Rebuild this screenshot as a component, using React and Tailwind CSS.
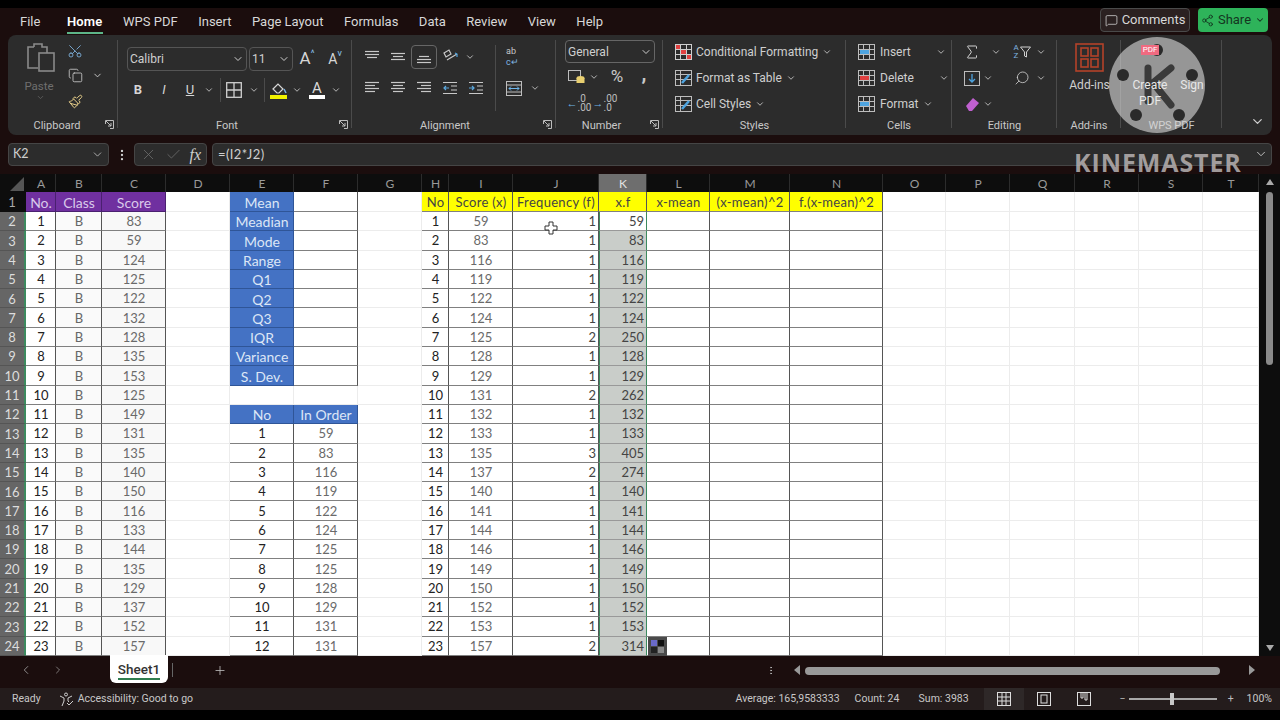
import React from "react";
import { ChevronDown, ChevronLeft, ChevronRight, Plus, Scissors, Copy, Paintbrush, X, Check, Search, Sigma, MessageSquare, Share2, EllipsisVertical } from "lucide-react";

const colDefs = ["A","B","C","D","E","F","G","H","I","J","K","L","M","N","O","P","Q","R","S","T"];
const scores = [83,59,124,125,122,132,128,135,153,125,149,131,135,140,150,116,133,144,135,129,137,152,157];
const sorted = [59,83,116,119,122,124,125,128,129,131,132,133,135,137,140,141,144,146,149,150,152,153,157];
const freq = [1,1,1,1,1,1,2,1,1,2,1,1,3,2,1,1,1,1,1,1,1,1,2];
const stats = ["Mean","Meadian","Mode","Range","Q1","Q2","Q3","IQR","Variance","S. Dev."];
const ordered = [59,83,116,119,122,124,125,125,128,129,131,131];
const yellowHeads = { H: "No", I: "Score (x)", J: "Frequency (f)", K: "x.f", L: "x-mean", M: "(x-mean)^2", N: "f.(x-mean)^2" };
const purpleHeads = { A: "No.", B: "Class", C: "Score" };

function cellInfo(c, r) {
  const i = r - 2;
  const center = "justify-center pl-[1px]";
  const line = "border-r-[#555] border-b-[#808080]";
  if ("ABC".includes(c)) {
    if (r === 1) return [purpleHeads[c], `${center} bg-[#7030a0] text-[#d9c9ea] text-[14px] border-r-[#4a2070] border-b-[#4a2070]`];
    if (c === "A") return [i + 1, `${center} ${line} text-[#222] bg-white`];
    if (c === "B") return ["B", `${center} ${line} text-[#666] bg-[#fafafa]`];
    return [scores[i], `${center} ${line} text-[#6a6a6a] bg-[#f8f8f8]`];
  }
  if (c === "E" || c === "F") {
    if (r <= 10) {
      if (c === "E") return [stats[r - 1], `${center} bg-[#4472c4] text-[#dce6f6] text-[14px] border-r-[#2f5597] border-b-[#2f5597]`];
      return ["", `bg-white ${line}`];
    }
    if (r === 12) return [c === "E" ? "No" : "In Order", `${center} bg-[#4472c4] text-[#dce6f6] text-[14px] border-r-[#2f5597] border-b-[#2f5597]`];
    if (r > 12) {
      const k = r - 13;
      return c === "E" ? [k + 1, `${center} ${line} text-[#222] bg-white`] : [ordered[k], `${center} ${line} text-[#6a6a6a] bg-white`];
    }
  }
  if ("HIJKLMN".includes(c)) {
    if (r === 1) return [yellowHeads[c], `${center} bg-[#ffff00] text-[#444] text-[13px] tracking-[0.3px] ${line}`];
    if (c === "H") return [i + 1, `${center} ${line} text-[#222] bg-white`];
    if (c === "I") return [sorted[i], `${center} ${line} text-[#6a6a6a] bg-white`];
    if (c === "J") return [freq[i], `justify-end pr-[2px] ${line} text-[#444] bg-white`];
    if (c === "K") {
      const v = sorted[i] * freq[i];
      return [v, `justify-end pr-[2px] text-[#444] border-b-[#999] border-l border-l-[#3c8a5f] border-r-[#3c8a5f] ${r === 2 ? "bg-white" : "bg-[#c9cdc9]"}`];
    }
    return ["", `bg-white ${line}`];
  }
  return ["", "bg-white border-r-[#ececec] border-b-[#ececec]"];
}

function Sheet() {
  const rows = Array.from({ length: 24 }, (_, n) => n + 1);
  return (
    <div className="grid w-[1259px] grid-cols-[26px_30px_46px_64px_64px_64px_64px_64px_27px_64px_86px_48px_63px_80px_93px_63px_64px_65px_64px_64px_56px] grid-rows-[18px_20px] auto-rows-[19.3px] font-['Lato',sans-serif] text-[13px]">
      <div className="bg-[#0d0d0d] flex items-end justify-end pr-[2px] pb-[1px]">
        <div className="w-0 h-0 border-l-[14px] border-l-transparent border-b-[14px] border-b-[#555]" />
      </div>
      {colDefs.map((c) => (
        <div key={c} className={`flex items-center justify-center pt-[2px] pl-[1px] text-[12px] border-r border-r-[#2c2c2c] ${c === "K" ? "bg-[#6e6e6e] text-[#e2e2e2]" : "bg-[#0d0d0d] text-[#9a9a9a]"}`}>{c}</div>
      ))}
      {rows.map((r) => (
        <React.Fragment key={r}>
          <div className={`flex items-center justify-center pt-[2px] text-[13px] border-r-2 ${r === 1 ? "bg-[#0d0d0d] text-[#aaa] border-r-[#0d0d0d]" : "bg-[#666] text-[#ddd] border-r-[#3c8a5f] border-b border-b-[#555]"}`}>{r}</div>
          {colDefs.map((c) => {
            const [t, cls] = cellInfo(c, r);
            return <div key={c} className={`flex items-center pt-[1.5px] overflow-hidden whitespace-nowrap border-r border-b ${cls}`}>{t}</div>;
          })}
        </React.Fragment>
      ))}
    </div>
  );
}

const Chev = ({ s = 12, c = "text-[#cfcfcf]" }) => <ChevronDown size={s} strokeWidth={2} className={c} />;

const Lines = ({ ys, xs }) => (
  <svg width="16" height="14" viewBox="0 0 16 14" stroke="#c8c8c8" strokeWidth="1.2">
    {ys.map((y, i) => <line key={i} x1={xs[i][0]} x2={xs[i][1]} y1={y} y2={y} />)}
  </svg>
);
const AL = <Lines ys={[1.5, 4.5, 7.5, 10.5]} xs={[[1, 15], [1, 11], [1, 15], [1, 11]]} />;
const AC = <Lines ys={[1.5, 4.5, 7.5, 10.5]} xs={[[1, 15], [3, 13], [1, 15], [3, 13]]} />;
const AR = <Lines ys={[1.5, 4.5, 7.5, 10.5]} xs={[[1, 15], [5, 15], [1, 15], [5, 15]]} />;
const VT = <Lines ys={[1.5, 4.5, 7.5]} xs={[[1, 15], [1, 15], [3, 13]]} />;
const VM = <Lines ys={[3.5, 6.5, 9.5]} xs={[[1, 15], [3, 13], [1, 15]]} />;
const VB = <Lines ys={[6.5, 9.5, 12.5]} xs={[[3, 13], [1, 15], [1, 15]]} />;
const Indent = ({ flip }) => (
  <svg width="16" height="14" viewBox="0 0 16 14" stroke="#c8c8c8" strokeWidth="1.2" fill="none">
    <path d="M1 1.5h14M1 12.5h14M9 5h6M9 9h6" />
    <path d={flip ? "M1 7h5M4 5l2 2-2 2" : "M2 7h5M4 5L2 7l2 2"} stroke="#5aa6dc" />
  </svg>
);
const Launcher = () => (
  <svg width="9" height="9" viewBox="0 0 9 9" fill="none" stroke="#bdbdbd" strokeWidth="1"><path d="M.5 4V.5h8v8H5" /><path d="M1 1l5 5M6 3v3H3" /></svg>
);

const Bx = ({ children, className = "" }) => <div className={`flex items-center justify-center shrink-0 ${className}`}>{children}</div>;

const Group = ({ w, lab = "", label, launcher, children, last }) => (
  <div className={`relative flex flex-col h-full shrink-0 pt-[5px] ${w} ${last ? "" : "after:absolute after:right-0 after:top-[5px] after:bottom-[7px] after:w-px after:bg-[#4b4b4b]"}`}>
    <div className="flex-1 min-h-0">{children}</div>
    <div className={`h-[22px] flex items-center justify-center text-[11px] text-[#c8c8c8] pt-[4px] ${lab}`}>
      {label}
      {launcher && <span className="absolute right-[4px] bottom-[6px]"><Launcher /></span>}
    </div>
  </div>
);

const GridIcon = () => (
  <svg width="17" height="16" viewBox="0 0 17 16" fill="none" stroke="#cfcfcf" strokeWidth="1">
    <rect x=".5" y=".5" width="16" height="15" />
    <path d="M.5 5.5h16M.5 10.5h16M5.5.5v15M11.5.5v15" />
    <rect x="1" y="1" width="4" height="4" fill="#e04040" stroke="none" /><rect x="6" y="6" width="5" height="4" fill="#e04040" stroke="none" /><rect x="12" y="11" width="4" height="4" fill="#e04040" stroke="none" />
  </svg>
);
const TableIcon = () => (
  <svg width="17" height="16" viewBox="0 0 17 16" fill="none" stroke="#bdbdbd" strokeWidth="1">
    <rect x=".5" y=".5" width="16" height="15" /><path d="M.5 4.5h16M.5 9.5h16M5.5.5v15" />
    <path d="M7 13l7-8" stroke="#4ea4e0" strokeWidth="2.5" />
  </svg>
);
const CellIcon = ({ color = "#4ea4e0" }) => (
  <svg width="17" height="16" viewBox="0 0 17 16" fill="none" stroke="#bdbdbd" strokeWidth="1">
    <rect x=".5" y=".5" width="16" height="15" /><path d="M.5 5.5h16M.5 10.5h16M5.5.5v15M11.5.5v15" />
    <rect x="2" y="6" width="9" height="4" fill={color} stroke="none" />
  </svg>
);

function Ribbon() {
  return (
    <div className="mx-2 h-[100px] rounded-lg bg-[#2c2c2c] flex font-['Roboto',sans-serif] text-[#d6d6d6] relative">
      <Group w="w-[110px]" lab="pr-[12px]" label="Clipboard" launcher>
        <div className="flex">
          <div className="w-[55px] flex flex-col items-center pl-[10px] pt-[2px]">
            <svg width="30" height="30" viewBox="0 0 30 30" fill="none" stroke="#8a8a8a" strokeWidth="1.6">
              <path d="M8 5H2v21h10" /><path d="M8 5V2h8v3h5v6" /><rect x="13" y="11" width="15" height="18" />
            </svg>
            <span className="text-[11.5px] text-[#6f6f6f] mt-[7px] leading-[14px] -ml-[3px]">Paste</span>
            <Chev s={9} c="text-[#666]" />
          </div>
          <div className="flex flex-col items-start pl-[2px] gap-[6px] pt-[1px]">
            <Bx className="w-[20px] h-[19px]"><Scissors size={16} strokeWidth={1.3} className="text-[#7fb4e0] -rotate-90" /></Bx>
            <div className="flex items-center"><Bx className="w-[20px] h-[19px]"><Copy size={15} strokeWidth={1.3} className="text-[#cfcfcf]" /></Bx><Bx className="w-[24px]"><Chev s={11} /></Bx></div>
            <Bx className="w-[20px] h-[19px] mt-[1px]"><Paintbrush size={15} strokeWidth={1.6} className="text-[#e8cf8a]" /></Bx>
          </div>
        </div>
      </Group>

      <Group w="w-[234px]" lab="pr-[16px]" label="Font" launcher>
        <div className="flex items-center pl-[9px] h-[24px] mt-[7px] gap-[2px]">
          <div className="w-[120px] h-[24px] rounded border border-[#555] flex items-center justify-between px-[2px] text-[12px] text-[#cfcfcf]">Calibri<Chev /></div>
          <div className="w-[44px] h-[24px] rounded border border-[#555] flex items-center justify-between px-[2px] text-[12px] text-[#cfcfcf]">11<Chev /></div>
          <Bx className="w-[26px] text-[17px] ml-[-1px]">A<sup className="text-[#8cc4ee] text-[9px] -mt-1">^</sup></Bx>
          <Bx className="w-[26px] text-[14px]">A<sup className="text-[#8cc4ee] text-[9px] -mt-1">v</sup></Bx>
        </div>
        <div className="flex items-center pl-[7px] h-[24px] mt-[7px] text-[13px]">
          <Bx className="w-[26px] font-bold">B</Bx>
          <Bx className="w-[26px] italic">I</Bx>
          <Bx className="w-[26px] underline">U</Bx>
          <Bx className="w-[12px]"><Chev s={10} /></Bx>
          <div className="w-px h-[24px] bg-[#4b4b4b] ml-[5px]" />
          <Bx className="w-[26px]"><svg width="16" height="16" viewBox="0 0 16 16" fill="none" stroke="#cfcfcf" strokeWidth="1.3"><rect x=".7" y=".7" width="14.6" height="14.6" /><path d="M8 1v14M1 8h14" /></svg></Bx>
          <Bx className="w-[14px]"><Chev s={10} /></Bx>
          <div className="w-px h-[24px] bg-[#4b4b4b] ml-[3px]" />
          <Bx className="w-[26px]"><svg width="17" height="19" viewBox="0 0 17 19" fill="none"><path d="M3 8l5-5 5 5-4 4H7z" stroke="#d8d8d8" strokeWidth="1.2" /><path d="M14 8l2 4" stroke="#7fb4e0" strokeWidth="1.5" /><rect y="14" width="17" height="4" fill="#f2f200" /></svg></Bx>
          <Bx className="w-[12px]"><Chev s={10} /></Bx>
          <Bx className="w-[28px] flex-col leading-[14px]"><span className="text-[15px] text-[#d8d8d8]">A</span><span className="w-[16px] h-[4px] bg-white" /></Bx>
          <Bx className="w-[10px]"><Chev s={10} /></Bx>
        </div>
      </Group>

      <Group w="w-[204px]" lab="pr-[18px]" label="Alignment" launcher>
        <div className="flex">
          <div className="pl-[7px] w-[143px]">
            <div className="flex items-center h-[26px] mt-[4px]">
              <Bx className="w-[26px]">{VT}</Bx><Bx className="w-[26px]">{VM}</Bx>
              <Bx className="w-[26px] h-[24px] rounded border border-[#666]">{VB}</Bx>
              <Bx className="w-[26px]"><svg width="17" height="16" viewBox="0 0 17 16" fill="none" stroke="#c8c8c8" strokeWidth="1.2"><path d="M2 4l5-3 2 4-5 3zM5 11l10-6" /><path d="M13 4l2 1v3" stroke="#4ea4e0" /></svg></Bx>
              <Bx className="w-[14px]"><Chev s={10} /></Bx>
            </div>
            <div className="flex items-center h-[26px] mt-[5px]">
              <Bx className="w-[26px]">{AL}</Bx><Bx className="w-[26px]">{AC}</Bx><Bx className="w-[26px]">{AR}</Bx>
              <Bx className="w-[26px]"><Indent /></Bx><Bx className="w-[26px]"><Indent flip /></Bx>
            </div>
          </div>
          <div className="w-px h-[66px] bg-[#4b4b4b] mt-[5px]" />
          <div className="pl-[9px]">
            <div className="h-[26px] mt-[4px] flex items-center pl-[1px]">
              <div className="flex flex-col text-[9px] leading-[11px] text-[#c8c8c8]"><span>ab</span><span className="text-[#7fb4e0]">c↵</span></div>
            </div>
            <div className="flex items-center h-[26px] mt-[5px]">
              <Bx className="w-[18px]"><svg width="16" height="15" viewBox="0 0 16 15" fill="none" stroke="#bdbdbd"><rect x=".5" y=".5" width="15" height="14" /><path d="M.5 4h15M.5 11h15" /><path d="M3 7.5h10M5 5.5l-2 2 2 2M11 5.5l2 2-2 2" stroke="#6fb6ea" /></svg></Bx>
              <Bx className="w-[24px]"><Chev s={10} /></Bx>
            </div>
          </div>
        </div>
      </Group>

      <Group w="w-[107px]" lab="pr-[16px]" label="Number" launcher>
        <div className="ml-[9px] w-[90px] h-[23px] rounded border border-[#666] flex items-center justify-between px-[2px] text-[12px] text-[#cfcfcf]">General<Chev /></div>
        <div className="flex items-center pl-[10px] h-[26px] mt-[1px]">
          <Bx className="w-[20px]"><svg width="17" height="14" viewBox="0 0 17 14" fill="none"><rect x=".5" y=".5" width="12" height="10" stroke="#bdbdbd" /><ellipse cx="12.5" cy="8" rx="4" ry="2" fill="#e8cf70" /><rect x="8.5" y="8" width="8" height="5" fill="#e8cf70" /></svg></Bx>
          <Bx className="w-[16px]"><Chev s={10} /></Bx>
          <Bx className="w-[30px] text-[17px] text-[#c8c8c8]">%</Bx>
          <Bx className="w-[24px] text-[20px] font-bold text-[#c8c8c8] -mt-2">,</Bx>
        </div>
        <div className="flex items-center pl-[10px] h-[26px] text-[10px] leading-[9px] text-[#bdbdbd]">
          <Bx className="w-[26px]"><span className="text-[#6fb6ea] text-[11px]">←</span><span>.0<br />.00</span></Bx>
          <Bx className="w-[26px]"><span className="text-[#6fb6ea] text-[11px]">→</span><span>.00<br />.0</span></Bx>
        </div>
      </Group>

      <Group w="w-[183px]" label="Styles">
        <div className="pl-[12px] -mt-[1px] flex flex-col text-[12px] text-[#cfcfcf] leading-[26px] whitespace-nowrap">
          <div className="flex items-center gap-[4px]"><GridIcon /><span>Conditional Formatting</span><Chev s={10} /></div>
          <div className="flex items-center gap-[4px]"><TableIcon /><span>Format as Table</span><Chev s={10} /></div>
          <div className="flex items-center gap-[4px]"><TableIcon /><span>Cell Styles</span><Chev s={10} /></div>
        </div>
      </Group>

      <Group w="w-[106px]" label="Cells">
        <div className="pl-[12px] -mt-[1px] flex flex-col text-[12px] text-[#cfcfcf] leading-[26px] whitespace-nowrap">
          <div className="flex items-center gap-[5px]"><CellIcon /><span>Insert</span><Chev s={10} c="text-[#cfcfcf] ml-[20px]" /></div>
          <div className="flex items-center gap-[5px]"><CellIcon color="#e04040" /><span>Delete</span><Chev s={10} c="text-[#cfcfcf] ml-[20px]" /></div>
          <div className="flex items-center gap-[5px]"><CellIcon /><span>Format</span><Chev s={10} /></div>
        </div>
      </Group>

      <Group w="w-[105px]" label="Editing">
        <div className="pl-[10px] -mt-[1px] flex flex-col">
          <div className="flex items-center h-[26px]"><Bx className="w-[20px]"><Sigma size={18} strokeWidth={1.3} /></Bx><Bx className="w-[28px]"><Chev s={10} /></Bx>
            <Bx className="w-[24px] gap-[1px]"><span className="text-[8px] text-[#7fb4e0] leading-[8px]">A<br />Z</span><svg width="11" height="12" viewBox="0 0 11 12" fill="none" stroke="#cfcfcf"><path d="M.5 1h10L6.5 6v5l-2-1V6z" /></svg></Bx><Bx className="w-[14px]"><Chev s={10} /></Bx></div>
          <div className="flex items-center h-[26px]"><Bx className="w-[20px]"><svg width="16" height="15" viewBox="0 0 16 15" fill="none"><rect x=".5" y=".5" width="15" height="14" stroke="#bdbdbd" /><path d="M8 3v8M5 8l3 3 3-3" stroke="#4ea4e0" strokeWidth="1.3" /></svg></Bx><Bx className="w-[12px]"><Chev s={10} /></Bx>
            <Bx className="w-[40px] pl-[16px]"><Search size={16} strokeWidth={1.2} className="-scale-x-100" /></Bx><Bx className="w-[14px]"><Chev s={10} /></Bx></div>
          <div className="flex items-center h-[26px]"><Bx className="w-[20px]"><svg width="15" height="15" viewBox="0 0 15 15"><path d="M1 9l7-8 6 5-7 8H4z" fill="#c060d0" /></svg></Bx><Bx className="w-[12px]"><Chev s={10} /></Bx></div>
        </div>
      </Group>

      <Group w="w-[64px]" label="Add-ins">
        <div className="flex flex-col items-center text-[12px] pl-[1px] pt-[3px]">
          <svg width="29" height="29" viewBox="0 0 29 29" fill="none" stroke="#b4432a" strokeWidth="1.6"><rect x="1" y="1" width="27" height="27" /><rect x="6" y="5" width="7" height="8" /><rect x="16" y="5" width="7" height="8" /><rect x="6" y="16" width="7" height="8" /><rect x="16" y="16" width="7" height="8" /></svg>
          <span className="mt-[5px] leading-[16px] text-[#d0d0d0]">Add-ins</span>
        </div>
      </Group>

      <Group w="w-[101px]" label="WPS PDF">
        <div className="relative z-10 flex text-[12px] text-[#e8e8e8] leading-[16px] text-center pl-[9px]">
          <div className="flex flex-col items-center w-[40px]">
            <span className="text-[8px] bg-[#f06a80] text-white px-[2px] mt-[5px] leading-[10px]">PDF</span>
            <span className="mt-[22px]">Create</span><span>PDF</span>
          </div>
          <div className="w-[44px] mt-[37px]">Sign</div>
        </div>
      </Group>

      <div className="flex-1 flex items-end justify-end pr-[7px] pb-[6px]"><ChevronDown size={15} className="text-[#cfcfcf]" /></div>
    </div>
  );
}

function Watermark() {
  return (
    <>
      <div className="absolute left-[1109px] top-[37px] w-[96px] h-[96px]">
        <svg width="96" height="96" viewBox="0 0 96 96">
          <circle cx="48" cy="48" r="48" fill="#d8d8d8" fillOpacity="0.62" />
          <circle cx="48" cy="13" r="6" fill="#2a2a2a" /><circle cx="14" cy="38" r="6" fill="#2a2a2a" /><circle cx="83" cy="38" r="6" fill="#2a2a2a" />
          <circle cx="27" cy="78" r="6" fill="#2a2a2a" /><circle cx="70" cy="78" r="6" fill="#2a2a2a" />
          <path d="M39 31v33M39 50l23-19M45 47l17 21" stroke="#3a3a3a" strokeWidth="7" fill="none" strokeLinecap="round" />
        </svg>
      </div>
      <div className="absolute left-[1074px] top-[151px] text-[25px] font-bold leading-[22px] tracking-[0.9px] text-[#b8b3b3]/85 font-['Open_Sans',sans-serif]">KINEMASTER</div>
    </>
  );
}

export default function App() {
  const menu = ["WPS PDF", "Insert", "Page Layout", "Formulas", "Data", "Review", "View", "Help"];
  return (
    <div className="relative w-[1280px] h-[720px] overflow-hidden bg-black flex flex-col font-['Roboto',sans-serif]">
      <div className="h-[8px] shrink-0 bg-black" />
      <div className="h-[27px] shrink-0 bg-[#1b0d0d] flex items-center pl-[20px] pr-[12px] text-[13px] text-[#d8d8d8] gap-[20.5px]">
        <span>File</span>
        <span className="relative ml-[6px] font-semibold text-white tracking-[0.2px]">Home<span className="absolute left-0 right-0 top-[20px] h-[2px] bg-[#5db588]" /></span>
        {menu.map((m) => <span key={m}>{m}</span>)}
        <div className="flex-1" />
        <div className="h-[24px] -mt-[3px] w-[90px] rounded border border-[#4a4a4a] bg-[#2b2121] flex items-center justify-center gap-[4px]"><MessageSquare size={13} strokeWidth={1.4} />Comments</div>
        <div className="h-[24px] -mt-[3px] -ml-[12.5px] w-[70px] rounded bg-[#2eb35a] flex items-center justify-center gap-[4px] text-[#14361f]"><Share2 size={13} strokeWidth={1.6} />Share<ChevronDown size={10} strokeWidth={2.5} /></div>
      </div>
      <div className="bg-[#1b0d0d] shrink-0 h-[108px]"><Ribbon /></div>
      <div className="bg-[#1b0d0d] shrink-0 h-[31px] px-2 flex gap-[5px] font-['Lato',sans-serif] text-[13px] text-[#cfcfcf]">
        <div className="w-[101px] h-[23px] rounded border border-[#454545] bg-[#2c2c2c] flex items-center justify-between px-[4px] text-[12.5px]">K2<ChevronDown size={13} strokeWidth={1.4} /></div>
        <Bx className="w-[15px] h-[23px]"><EllipsisVertical size={14} strokeWidth={2} /></Bx>
        <div className="w-[73px] h-[23px] rounded border border-[#454545] bg-[#2c2c2c] flex items-center justify-around px-[1px] text-[#6a6a6a]">
          <X size={17} strokeWidth={1.2} /><Check size={17} strokeWidth={1.2} /><span className="italic font-['Liberation_Serif',serif] text-[16px] text-[#cfcfcf]">fx</span>
        </div>
        <div className="relative flex-1 h-[23px] rounded border border-[#454545] bg-[#2c2c2c] flex items-center pl-[5px] tracking-[0.4px]">=(I2*J2)<ChevronDown size={14} strokeWidth={1.5} className="absolute right-[3px] top-[3px]" /></div>
      </div>
      <div className="relative shrink-0 h-[482px] flex bg-[#0d0d0d]">
        <Sheet />
        <div className="w-[21px] flex flex-col items-center pr-[1px] pl-[1px] pt-[5px] relative">
          <div className="w-0 h-0 border-l-[4px] border-r-[4px] border-b-[6px] border-l-transparent border-r-transparent border-b-[#aaa]" />
          <div className="w-[7px] h-[173px] rounded bg-[#8a8a8a] mt-[7px]" />
          <div className="flex-1" />
          <div className="w-0 h-0 border-l-[4px] border-r-[4px] border-t-[6px] border-l-transparent border-r-transparent border-t-[#aaa] mb-[5px]" />
        </div>
        <svg className="absolute left-[544px] top-[47px]" width="14" height="14" viewBox="0 0 14 14"><path d="M5 1h4v4h4v4H9v4H5V9H1V5h4z" fill="#fff" stroke="#333" strokeWidth="1" /></svg>
        <div className="absolute left-[648px] top-[463px] w-[19px] h-[19px] bg-[#4a4a4a] flex items-center justify-center">
          <svg width="13" height="13" viewBox="0 0 13 13"><rect width="6" height="6" fill="#6a6ac8" /><rect x="7" width="6" height="6" fill="#111" /><rect y="7" width="6" height="6" fill="#222" /><rect x="7" y="7" width="6" height="6" fill="#888" /></svg>
        </div>
      </div>
      <div className="relative shrink-0 h-[32px] bg-[#1b0d0d] flex items-start text-[#bdbdbd]">
        <Bx className="w-[52px] h-[28px]"><ChevronLeft size={14} strokeWidth={1.2} /></Bx>
        <Bx className="w-[12px] h-[28px]"><ChevronRight size={14} strokeWidth={1.2} /></Bx>
        <div className="ml-[46px] w-[58px] h-[28px] bg-white rounded-b-md flex items-center justify-center relative text-[13.5px] text-[#333] font-medium -mt-[1px]">
          Sheet1<span className="absolute left-[8px] right-[8px] bottom-[3px] h-[2px] bg-[#2f7d4f]" />
        </div>
        <div className="w-px h-[14px] bg-[#666] ml-[4px] mt-[7px]" />
        <Bx className="w-[14px] h-[28px] ml-[40px]"><Plus size={15} strokeWidth={1.4} /></Bx>
        <Bx className="w-[10px] h-[28px] ml-[539px]"><EllipsisVertical size={13} strokeWidth={2} /></Bx>
        <Bx className="w-[8px] h-[28px] ml-[17px]"><span className="w-0 h-0 border-t-[5px] border-b-[5px] border-r-[6px] border-t-transparent border-b-transparent border-r-[#999]" /></Bx>
        <div className="ml-[4px] mt-[11px] w-[415px] h-[8px] rounded bg-[#999]" />
        <Bx className="w-[8px] h-[28px] ml-[28px]"><span className="w-0 h-0 border-t-[5px] border-b-[5px] border-l-[6px] border-t-transparent border-b-transparent border-l-[#999]" /></Bx>
      </div>
      <div className="shrink-0 h-[22px] bg-[#241c1c] flex items-center pl-[12px] pr-[8px] text-[10.5px] text-[#c8c8c8] whitespace-nowrap">
        <span>Ready</span>
        <svg className="ml-[18px]" width="15" height="15" viewBox="0 0 15 15" fill="none" stroke="#cfcfcf" strokeWidth="1"><circle cx="7" cy="2.5" r="1.5" /><path d="M1 4l4 2v3l-2 5M13 4L9 6v3l1 1" /><path d="M8 11l2 2 4-4" /></svg>
        <span className="ml-[4px]">Accessibility: Good to go</span>
        <div className="flex-1" />
        <span className="w-[119px]">Average: 165,9583333</span>
        <span className="w-[64px]">Count: 24</span>
        <span className="w-[65px]">Sum: 3983</span>
        <div className="w-[40px] h-[22px] bg-[#2e2828] flex items-center justify-center"><svg width="14" height="14" viewBox="0 0 14 14" fill="none" stroke="#ddd"><rect x=".5" y=".5" width="13" height="13" /><path d="M5 1v12M9 1v12M1 5h12M1 9h12" /></svg></div>
        <Bx className="w-[40px]"><svg width="14" height="14" viewBox="0 0 14 14" fill="none" stroke="#ddd"><rect x=".5" y=".5" width="13" height="13" /><rect x="4" y="3" width="6" height="8" /></svg></Bx>
        <Bx className="w-[40px]"><svg width="14" height="14" viewBox="0 0 14 14" fill="none" stroke="#ddd"><rect x=".5" y=".5" width="13" height="13" /><path d="M4 1v5h2V1M8 1v7h2V1" /></svg></Bx>
        <span className="ml-[16px] text-[#bbb]">−</span>
        <div className="relative ml-[3px] w-[88px] h-[2px] bg-[#a8a8a8]"><span className="absolute left-[41px] -top-[5px] w-[4px] h-[12px] bg-[#c8c8c8]" /></div>
        <span className="ml-[11px] text-[#bbb]">+</span>
        <span className="ml-[13px]">100%</span>
      </div>
      <div className="flex-1 bg-black" />
      <Watermark />
    </div>
  );
}
